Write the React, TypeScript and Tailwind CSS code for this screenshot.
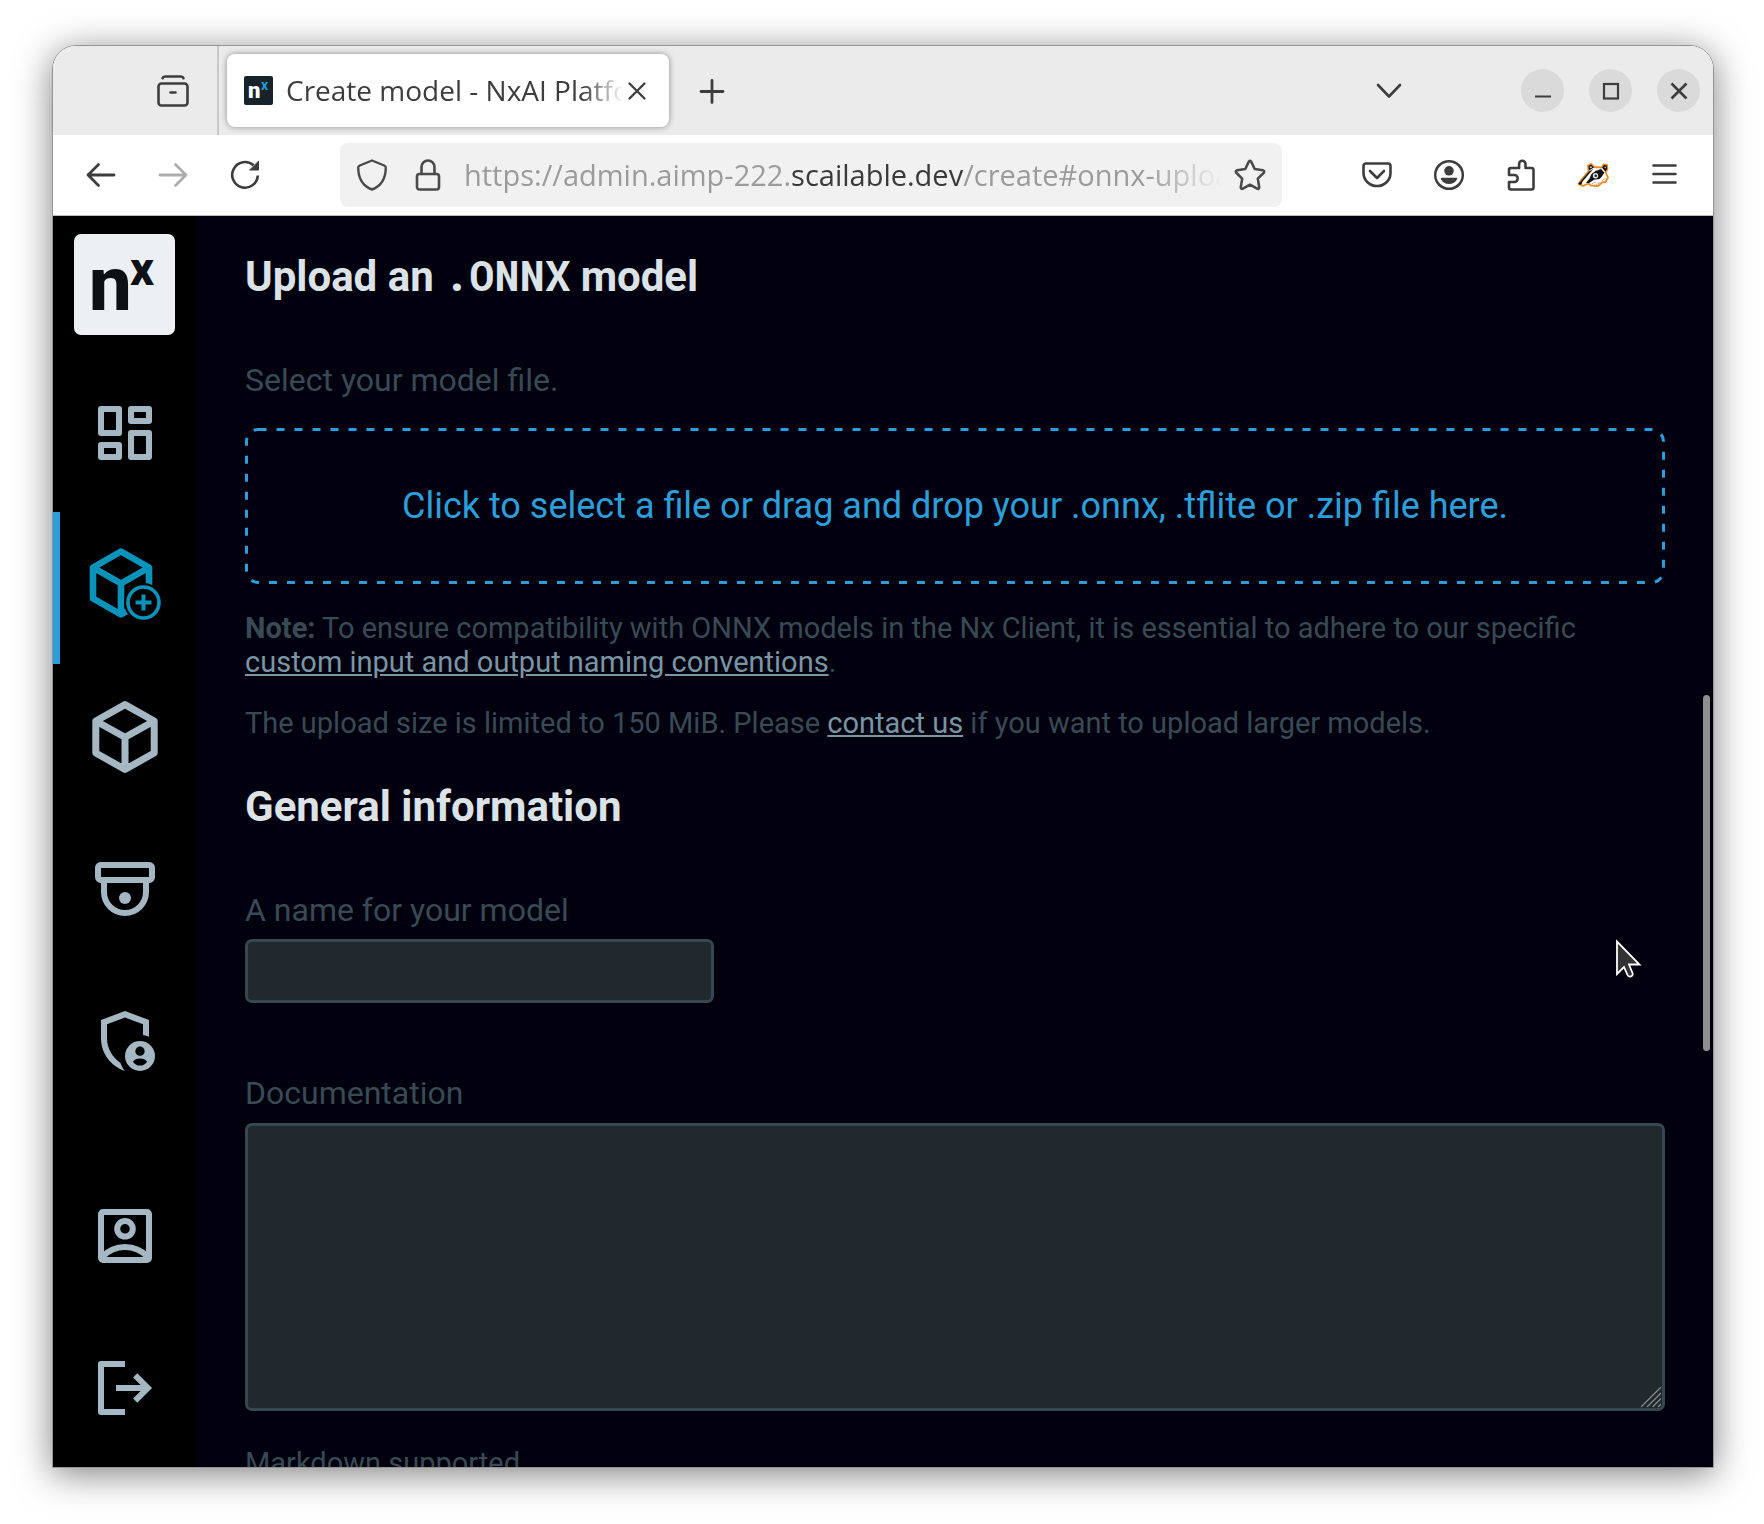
import type { ReactNode } from "react";

function Logo() {
  return (
    <svg viewBox="0 0 101 101" className="h-[101px] w-[101px]" role="img" aria-label="nx">
      <rect width="101" height="101" rx="7" fill="#eceff3" />
      <text x="15" y="76" fontFamily="Roboto, sans-serif" fontWeight="800" fontSize="76" fill="#0d1114">n</text>
      <text x="56" y="51" fontFamily="Roboto, sans-serif" fontWeight="800" fontSize="47" fill="#0d1114">x</text>
    </svg>
  );
}

function Favicon() {
  return (
    <svg viewBox="0 0 29 29" className="h-[29px] w-[29px] shrink-0" aria-hidden="true">
      <rect width="29" height="29" rx="2" fill="#17222b" />
      <text x="4" y="22" fontFamily="Roboto, sans-serif" fontWeight="900" fontSize="22" fill="#fff">n</text>
      <text x="17" y="14" fontFamily="Roboto, sans-serif" fontWeight="700" fontSize="14" fill="#1f9bd9">x</text>
    </svg>
  );
}

/* Chrome toolbar icons share a 32px canvas. */
function Stroke({ children, width = 2.4 }: { children: ReactNode; width?: number }) {
  return (
    <svg viewBox="0 0 32 32" className="h-8 w-8 shrink-0" fill="none" stroke="currentColor" strokeWidth={width} strokeLinecap="round" strokeLinejoin="round" aria-hidden="true">
      {children}
    </svg>
  );
}

function ToolButton({ label, children, dim }: { label: string; children: ReactNode; dim?: boolean }) {
  return (
    <button type="button" aria-label={label} className={dim ? "flex h-16 w-[72px] items-center justify-center text-[#adadad]" : "flex h-16 w-[72px] items-center justify-center text-[#3d3d3d]"}>
      {children}
    </button>
  );
}

function WindowButton({ label, children }: { label: string; children: ReactNode }) {
  return (
    <button type="button" aria-label={label} className="flex h-[43px] w-[43px] items-center justify-center rounded-full bg-[#dadada] text-[#3d3d3d]">
      {children}
    </button>
  );
}

function TabBar() {
  return (
    <div className="flex h-[89px] shrink-0 items-center bg-[#ebebeb] pr-[13px] text-[#3d3d3d]">
      <div className="flex h-full w-[166px] items-center justify-end border-r-2 border-[#c8c8c8] pr-7">
        <button type="button" aria-label="Recent browsing" className="flex">
          <Stroke width={2.6}>
            <rect x="1.500" y="8.500" width="29" height="22" rx="3" />
            <path d="M5.500 3.200C6 1.800 6.800 1.500 8 1.500h16c1.200 0 2 .3 2.500 1.700" />
            <path d="M13.500 17.500h5" />
          </Stroke>
        </button>
      </div>
      <div className="ml-2 flex h-[73px] w-[442px] items-center rounded-lg bg-white pl-[17px] pr-[22px] shadow-[0_0_6px_rgba(0,0,0,0.4)]">
        <Favicon />
        <span className="ml-[13px] min-w-0 flex-1 overflow-hidden pb-0.5 whitespace-nowrap font-['Open_Sans',sans-serif] text-[28px] leading-9 [mask-image:linear-gradient(to_right,black_88%,transparent)]">
          Create model - NxAI Platform
        </span>
        <button type="button" aria-label="Close tab" className="ml-1 flex">
          <svg viewBox="0 0 20 20" className="h-5 w-5" stroke="currentColor" strokeWidth="2.300" strokeLinecap="round" aria-hidden="true">
            <path d="M2.500 2.500l15 15M17.500 2.500l-15 15" />
          </svg>
        </button>
      </div>
      <button type="button" aria-label="New tab" className="ml-[27px] flex">
        <Stroke width={2.800}>
          <path d="M16 5.500v22M5 16.500h22" />
        </Stroke>
      </button>
      <button type="button" aria-label="List all tabs" className="ml-auto mr-[116px] flex">
        <Stroke width={2.600}>
          <path d="M5 10l11 11.500L27 10" />
        </Stroke>
      </button>
      <div className="flex gap-[25px]">
        <WindowButton label="Minimize">
          <svg viewBox="0 0 20 20" className="h-5 w-5" stroke="currentColor" strokeWidth="2.200" aria-hidden="true"><path d="M2 15.500h16" /></svg>
        </WindowButton>
        <WindowButton label="Maximize">
          <svg viewBox="0 0 20 20" className="h-5 w-5" fill="none" stroke="currentColor" strokeWidth="2.200" aria-hidden="true"><rect x="3" y="3" width="14" height="14.500" /></svg>
        </WindowButton>
        <WindowButton label="Close">
          <svg viewBox="0 0 20 20" className="h-5 w-5" stroke="currentColor" strokeWidth="2.600" aria-hidden="true"><path d="M2.500 2.500l15 15M17.500 2.500l-15 15" /></svg>
        </WindowButton>
      </div>
    </div>
  );
}

function Badger() {
  return (
    <svg viewBox="0 0 32 24" className="h-6 w-8" strokeLinejoin="round" aria-hidden="true">
      <path d="M1.500 21 L4.500 16.500 L11.500 8.500 L11 2.500 L14 1 L17.500 4 L24.500 4.500 L26.500 1.500 L30 2 L30.500 6.500 L28.500 9 L31 14.500 L28.500 19 L25 19.500 L21 23 L14 22.500 L11.500 20.500 L6 22.800 Z" fill="#fff" stroke="#f08a24" strokeWidth="1.800" />
      <path d="M12 7.500l-.5-4.500 2.500-1.500 3 3zM25 4.800l2-2.800 2.800.5.300 3.800-1.800 2.200z" fill="#111" />
      <path d="M13 5.200l-.3-1.500 1.300-.6 1.200 1.500zM27.200 4.600l1-1.200.7.300v1.800z" fill="#ccc" />
      <path d="M2.500 20 L5 16.800 L12 8.600 L16.500 6 L13 9.800 L6 18 L4.500 20.500z" fill="#111" />
      <path d="M9 20 L12.500 15.500 L14.500 11 L18.500 8 L24 6 L27.500 9.500 L24.500 14 L22.500 16 L17 16.800 L12 20z" fill="#111" />
      <circle cx="18.500" cy="12.800" r="2.700" fill="#e5e5e5" />
      <circle cx="18.700" cy="12.800" r="1.300" fill="#222" />
      <path d="M15 20.500l4-1.500M19 21.500l4-2M25 17.500l3.500-2" stroke="#999" strokeWidth=".8" />
      <circle cx="3.300" cy="20.300" r="1.500" fill="#111" />
    </svg>
  );
}

function NavBar() {
  return (
    <div className="flex h-[81px] shrink-0 items-center border-b border-[#bdbdbd] bg-white px-3">
      <ToolButton label="Back">
        <Stroke width={2.800}><path d="M3 16h26M13.500 5.500L3 16l10.500 10.500" /></Stroke>
      </ToolButton>
      <ToolButton label="Forward" dim>
        <Stroke width={2.800}><path d="M3 16h26M18.500 5.500L29 16 18.500 26.500" /></Stroke>
      </ToolButton>
      <ToolButton label="Reload">
        <Stroke width={2.600}>
          <path d="M28.800 16.500A12.800 12.800 0 1 1 24.500 6.300" strokeLinecap="butt" />
          <path d="M29.500 2.500v8.500h-8.500z" fill="currentColor" strokeWidth="1" />
        </Stroke>
      </ToolButton>
      <div className="mx-[59px] flex h-16 min-w-0 flex-1 items-center rounded-lg bg-[#f1f1f1] pl-4 pr-4 text-[#4a4a4a]">
        <Stroke>
          <path d="M16 1.500l12.200 5c1.200.5 1.600 1 1.600 2.200C29.600 19.500 25.500 27 16 30.500 6.500 27 2.400 19.500 2.200 8.700c0-1.200.4-1.700 1.600-2.200z" />
        </Stroke>
        <span className="ml-6 flex">
          <Stroke width={2.600}>
            <rect x="5" y="15" width="22" height="15.500" rx="2.500" />
            <path d="M9.500 15V8a6.500 6.500 0 0 1 13 0v7" />
          </Stroke>
        </span>
        <span className="ml-5 min-w-0 flex-1 overflow-hidden whitespace-nowrap font-['Open_Sans',sans-serif] text-[29px] leading-10 text-[#9b9b9b] [mask-image:linear-gradient(to_right,black_90%,transparent)]">
          https://admin.aimp-222.<span className="text-[#3a3a3a]">scailable.dev</span>/create#onnx-upload
        </span>
        <button type="button" aria-label="Bookmark this page" className="ml-3 flex">
          <Stroke width={2.600}>
            <path d="M14.800 2.600c.5-1.200 1.900-1.200 2.400 0l3.500 7.400 8.200 1.200c1.300.2 1.700 1.700.8 2.600l-5.900 5.800 1.400 8.500c.2 1.300-1 2.100-2.100 1.500L16 25.700l-7.100 3.900c-1.100.6-2.300-.2-2.100-1.500l1.400-8.500-5.900-5.800c-.9-.9-.5-2.400.8-2.600l8.200-1.200z" />
          </Stroke>
        </button>
      </div>
      <ToolButton label="Save to Pocket">
        <Stroke width={2.600}>
          <path d="M5 4.500h22c1.500 0 2.500 1 2.500 2.500v7a13.500 13 0 0 1-27 0V7C2.500 5.500 3.500 4.500 5 4.500z" />
          <path d="M9 12l7 7 7-7" />
        </Stroke>
      </ToolButton>
      <ToolButton label="Account">
        <Stroke width={2.500}>
          <circle cx="16" cy="16" r="13.800" />
          <circle cx="16" cy="11.800" r="4.800" fill="currentColor" stroke="none" />
          <path d="M8.500 18.800h15c.8 0 .8.800.5 1.500-1.300 3-4.300 4.700-8 4.700s-6.700-1.700-8-4.700c-.3-.7-.3-1.500.5-1.500z" fill="currentColor" stroke="none" />
        </Stroke>
      </ToolButton>
      <ToolButton label="Extensions">
        <Stroke width={2.600}>
          <path d="M6 30.500h20.500a2 2 0 0 0 2-2V11a2 2 0 0 0-2-2h-6V5a3.200 3.200 0 0 0-6.400 0v4H6a2 2 0 0 0-2 2v5h5.200a3.500 3.500 0 0 1 0 7H4v5.500a2 2 0 0 0 2 2z" />
        </Stroke>
      </ToolButton>
      <ToolButton label="Privacy Badger">
        <Badger />
      </ToolButton>
      <ToolButton label="Open menu">
        <Stroke width={2.600}><path d="M4.500 6.500h22M4.500 15h22M4.500 23.500h22" /></Stroke>
      </ToolButton>
    </div>
  );
}

function SideLink({ label, active, children }: { label: string; active?: boolean; children: ReactNode }) {
  return (
    <a
      href="#"
      aria-label={label}
      className={
        active
          ? "flex h-[152px] items-center justify-center border-l-[7px] border-[#2c9fda] pr-2 pb-2 text-[#0893ba]"
          : "flex h-[152px] items-center justify-center pb-1.5 text-[#a4b7c3]"
      }
    >
      {children}
    </a>
  );
}

function MenuIcon({ children }: { children: ReactNode }) {
  return (
    <svg viewBox="0 0 24 24" className="h-[72px] w-[72px]" fill="none" stroke="currentColor" strokeWidth="2" aria-hidden="true">
      {children}
    </svg>
  );
}

function Sidebar() {
  return (
    <nav aria-label="Main" className="flex w-36 shrink-0 flex-col bg-black">
      <a href="#" className="mt-[18px] mb-[25px] ml-[21px] block">
        <Logo />
      </a>
      <SideLink label="Dashboard">
        <MenuIcon>
          <g strokeLinejoin="round">
            <rect x="4" y="4" width="6" height="8" />
            <rect x="4" y="16" width="6" height="4" />
            <rect x="14" y="4" width="6" height="4" />
            <rect x="14" y="12" width="6" height="8" />
          </g>
        </MenuIcon>
      </SideLink>
      <SideLink label="Create model" active>
        <svg viewBox="0 0 72 72" className="h-[72px] w-[72px]" fill="none" stroke="currentColor" strokeWidth="6.600" strokeLinejoin="round" aria-hidden="true">
          <path d="M32 3.500 60 19.500V50.500L32 66.500 4 50.500V19.500ZM4 19.500 32 35.500 60 19.500M32 35.500V66.500" />
          <circle cx="54.500" cy="54.500" r="19.500" fill="#000" stroke="none" />
          <circle cx="54.500" cy="54.500" r="15.500" strokeWidth="3.600" />
          <path d="M46.500 54.500h16M54.500 46.500v16" strokeWidth="4" />
        </svg>
      </SideLink>
      <SideLink label="Models">
        <svg viewBox="0 0 72 72" className="h-[72px] w-[72px]" fill="none" stroke="currentColor" strokeWidth="7" strokeLinejoin="round" aria-hidden="true">
          <path d="M36 3.600 65.200 20V52L36 68.400 6.800 52V20ZM6.800 20 36 36.200 65.200 20M36 36V68.400" />
        </svg>
      </SideLink>
      <SideLink label="Devices">
        <MenuIcon>
          <rect x="3" y="4" width="18" height="5" rx="0.900" />
          <path d="M5 9.500V13a7 7 0 0 0 14 0V9.500" />
          <circle cx="12" cy="15" r="2" fill="currentColor" stroke="none" />
        </MenuIcon>
      </SideLink>
      <SideLink label="Administration">
        <MenuIcon>
          <path d="M12 2 4 5v6.100c0 5 3.200 9.200 7.900 10.900-.6-.9-1.100-1.800-1.400-2.700C7.900 17.600 6 14.500 6 11.100V6.400l6-2.250 6 2.250V10c.7.100 1.400.3 2 .6V5z" fill="currentColor" stroke="none" />
          <circle cx="17" cy="17" r="5" fill="currentColor" stroke="none" />
          <circle cx="17" cy="15.400" r="1.550" fill="#000" stroke="none" />
          <path d="M14.600 18.900c.5-.7 1.400-1.100 2.400-1.100s1.900.4 2.400 1.100c-.5.800-1.400 1.300-2.400 1.300s-1.900-.5-2.400-1.300z" fill="#000" stroke="none" />
        </MenuIcon>
      </SideLink>
      <div className="mt-auto">
        <SideLink label="Profile">
          <MenuIcon>
            <rect x="4" y="4" width="16" height="16" rx="0.700" />
            <circle cx="12" cy="9.600" r="2.600" />
            <path d="M4.500 18.900A10.300 10.300 0 0 1 19.500 18.900" />
          </MenuIcon>
        </SideLink>
        <SideLink label="Log out">
          <MenuIcon>
            <path d="M12 4H4V20H12" strokeLinejoin="round" />
            <path d="M9 12H19.500M15.400 7.800 19.600 12 15.400 16.200" />
          </MenuIcon>
        </SideLink>
      </div>
    </nav>
  );
}

function Main() {
  return (
    <main className="relative min-w-0 flex-1 overflow-hidden bg-[#02000f] px-12 pt-9 font-[Roboto,sans-serif] text-[#384a54]">
      <h2 className="text-[42px] leading-[50px] font-bold text-[#dce3e7]">
        Upload an <code className="font-['Roboto_Mono','Liberation_Mono',monospace] leading-none">.ONNX</code> model
      </h2>
      <p className="mt-[58px] text-[32px] leading-10">Select your model file.</p>
      <button type="button" className="relative mt-7 flex h-[156px] w-full items-center justify-center text-[36px] leading-10 text-[#2c9fda]">
        <svg className="absolute inset-0 h-full w-full" fill="none" stroke="currentColor" strokeWidth="3" strokeDasharray="8 10" aria-hidden="true">
          <rect x="1.500" y="1.500" rx="12" className="h-[calc(100%-3px)] w-[calc(100%-3px)]" />
        </svg>
        Click to select a file or drag and drop your .onnx, .tflite or .zip file here.
      </button>
      <p className="mt-[27px] text-[29px] leading-[34px]">
        <strong>Note:</strong> To ensure compatibility with ONNX models in the Nx Client, it is essential to adhere to our specific{" "}
        <a href="#" className="text-[#7a95a3] underline">custom input and output naming conventions</a>.
      </p>
      <p className="mt-[27px] text-[29px] leading-[34px]">
        The upload size is limited to 150 MiB. Please <a href="#" className="text-[#7a95a3] underline">contact us</a> if you want to upload larger models.
      </p>
      <h2 className="mt-[42px] text-[42px] leading-[50px] font-bold text-[#dce3e7]">General information</h2>
      <label htmlFor="name" className="mt-[58px] block text-[32px] leading-10">A name for your model</label>
      <input id="name" type="text" className="mt-[9px] block h-16 w-[469px] rounded-[7px] border-[3px] border-[#37474f] bg-[#21292f] px-4 text-[29px]" />
      <label htmlFor="docs" className="mt-[70px] block text-[32px] leading-10">Documentation</label>
      <div className="relative mt-[10px]">
        <textarea id="docs" className="block h-72 w-full resize-none rounded-[7px] border-[3px] border-[#37474f] bg-[#21292f] p-4 text-[29px]" />
        <svg viewBox="0 0 20 20" className="absolute right-1 bottom-1 h-5 w-5" stroke="#85898c" strokeWidth="1.300" aria-hidden="true">
          <path d="M0 20 20 0M6 20 20 6M11.500 20 20 11.500M17 20l3-3" />
        </svg>
      </div>
      <p className="mt-[35px] text-[29px] leading-[34px]">Markdown supported</p>
      <div className="absolute top-[479px] right-[3px] h-[356px] w-[7px] rounded-full bg-[#8f8f8f]" />
      <svg viewBox="0 0 26 40" className="absolute top-[723px] right-[71px] h-10 w-[26px]" aria-hidden="true">
        <path d="M1 2.500V35l7-7 3.500 8c1.200 2.800 6.500 1.500 5-2l-3.500-8.500h10.500z" fill="#333" stroke="#fff" strokeWidth="1.800" />
      </svg>
    </main>
  );
}

export default function App() {
  return (
    <div className="flex h-screen bg-white pt-[45px] pr-[50px] pb-14 pl-[52px]">
      <div className="flex min-w-0 flex-1 flex-col overflow-hidden rounded-t-[24px] border border-[#959595] shadow-[0_6px_36px_rgba(0,0,0,0.5)]">
        <TabBar />
        <NavBar />
        <div className="flex min-h-0 flex-1">
          <Sidebar />
          <Main />
        </div>
      </div>
    </div>
  );
}
